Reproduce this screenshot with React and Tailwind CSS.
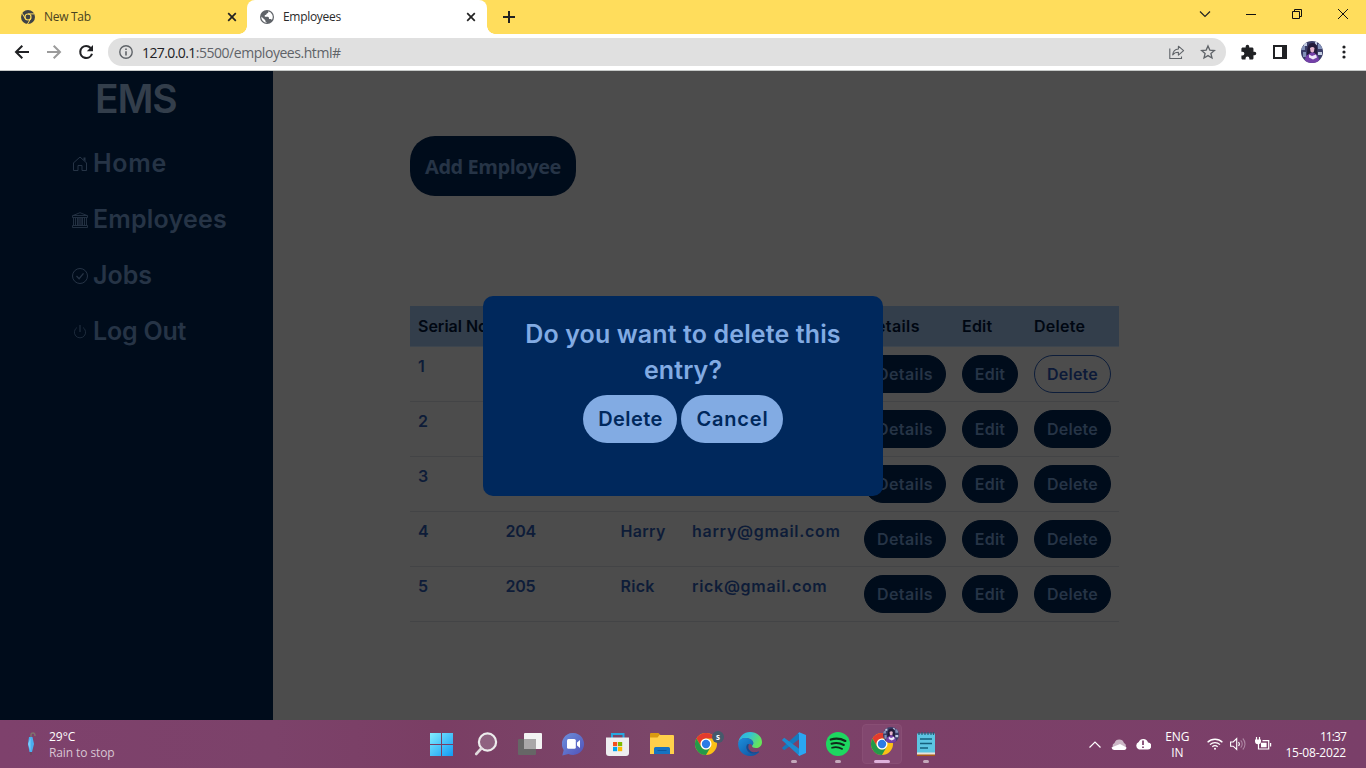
import React from "react";

/* ---------- Browser icons ---------- */
const CloseX = () => (
  <svg width="10" height="10" viewBox="0 0 10 10" stroke="#222" strokeWidth="1.7" fill="none">
    <path d="M1.2 1.2l7.6 7.6M8.8 1.2L1.2 8.8" />
  </svg>
);

const GrayChrome = () => (
  <svg width="14" height="14" viewBox="0 0 14 14">
    <circle cx="7" cy="7" r="7" fill="#3f4246" />
    <circle cx="7" cy="7" r="3.6" fill="#ffdd5c" />
    <circle cx="7" cy="7" r="2.4" fill="#3f4246" />
    <path d="M7 3.9h6.4M4.3 8.6L1.1 3.2M9.7 8.6l-3.2 5.4" stroke="#ffdd5c" strokeWidth="1" />
  </svg>
);

const Globe = () => (
  <svg width="16" height="16" viewBox="0 0 16 16">
    <circle cx="8" cy="8" r="7" fill="#5f6368" />
    <path d="M9.200 2.300c.5 1.200-.2 2-1.400 2.200-.3 1.200-1 1.500-2 1.600v1.600h2.900c1.200 0 1.300 1 1.300 2.200h1.300c1 0 1.300.5 1.500 1.100A5.700 5.700 0 009.200 2.300z" fill="#fff" />
    <path d="M2.300 7.600l4 3.700c0 1.200.3 1.700 1.200 1.800v.6A5.700 5.700 0 012.300 7.600z" fill="#fff" />
  </svg>
);

const BackIcon = ({ flip }) => (
  <svg width="16" height="16" viewBox="0 0 16 16" fill="none" stroke={flip ? "#9b9b9b" : "#202124"} strokeWidth="2" className={flip ? "-scale-x-100" : ""}>
    <path d="M15 8H2.500M8.300 1.700L2 8l6.300 6.300" />
  </svg>
);

const ReloadIcon = () => (
  <svg width="16" height="16" viewBox="0 0 16 16">
    <path d="M14 9.800A6 6 0 118.200 2c1.800 0 3.300.8 4.400 2" fill="none" stroke="#202124" strokeWidth="2.100" />
    <path d="M15 1v6.200H8.800z" fill="#202124" />
  </svg>
);

const InfoIcon = () => (
  <svg width="14" height="14" viewBox="0 0 14 14" fill="none" stroke="#5f6368" strokeWidth="1.400">
    <circle cx="7" cy="7" r="6.200" />
    <path d="M7 6.200v4.200M7 3.500v1.500" strokeWidth="1.600" />
  </svg>
);

const ShareIcon = () => (
  <svg width="16" height="16" viewBox="0 0 16 16" fill="none" stroke="#5f6368" strokeWidth="1.100">
    <path d="M.8 4.500v10h11.700V12.500" />
    <path d="M3.700 10.800c.4-3.800 2.200-5.600 5.700-5.800V2.200l5.200 4.500-5.200 4.400V8.300c-2.500 0-4.300.6-5.700 2.500z" strokeLinejoin="round" />
  </svg>
);

const StarIcon = () => (
  <svg width="16" height="16" viewBox="0 0 16 16" fill="none" stroke="#5f6368" strokeWidth="1.300">
    <path d="M8 1.900l1.800 4.200 4.600.4-3.500 3 1.100 4.500L8 11.600 4 14l1.100-4.500-3.500-3 4.600-.4z" />
  </svg>
);

const PuzzleIcon = () => (
  <svg width="17" height="17" viewBox="0 0 24 24" fill="#202124">
    <path d="M20.500 11H19V7c0-1.100-.9-2-2-2h-4V3.500a2.500 2.500 0 00-5 0V5H4c-1.100 0-2 .9-2 2v3.800h1.500a2.700 2.700 0 010 5.400H2V20c0 1.100.9 2 2 2h3.800v-1.500a2.700 2.700 0 015.400 0V22H17c1.100 0 2-.9 2-2v-4h1.500a2.500 2.500 0 000-5z" />
  </svg>
);

const Avatar = ({ className }) => (
  <svg viewBox="0 0 22 22" className={className}>
    <clipPath id="face"><circle cx="11" cy="11" r="11" /></clipPath>
    <g clipPath="url(#face)">
      <rect width="22" height="22" fill="#3a3d68" />
      <path d="M0 5h4v4H0zM17 3h4v5h-4zM2 11h3v5H2z" fill="#8391b8" />
      <path d="M3 2h3v3H3zM17 11h4v3h-4zM14 1h2v3h-2z" fill="#c3cce2" />
      <path d="M6 14c0-8 1-12 5.500-12S17 6 16 14z" fill="#241b3a" />
      <path d="M9 7q2.500-2 4.500 0l-.5 3.500-1.700 1.500-1.800-1.500z" fill="#e4b4ca" />
      <path d="M3 22l2-7 5-3.500h3l4 3.500 2 7z" fill="#7440a8" />
      <path d="M8 13.500l3 1.500 4-1.500 1 3-4 2-4-2z" fill="#efe6f8" />
    </g>
  </svg>
);

/* ---------- Sidebar icons ---------- */
const iconBase = { width: 16, height: 16, viewBox: "0 0 16 16", fill: "none", stroke: "currentColor" };
const HomeIcon = () => (
  <svg {...iconBase} strokeWidth="1">
    <path d="M1.500 6.800v7.700H6V9.500h4v5h4.500V6.800M1.200 7.200L8 1l6.800 6.200" />
    <path d="M11.500 1.500h2v4l-2-1.900z" fill="currentColor" stroke="none" />
  </svg>
);
const BankIcon = () => (
  <svg {...iconBase} strokeWidth=".9">
    <path d="M1 3.500L8 .7l7 2.800M.5 3.500h15v2H.5zM.5 13.500h15v2H.5zM1.500 5.500v8M3.500 5.500v8M5.500 5.500v8M10.500 5.500v8M12.500 5.500v8M14.500 5.500v8" />
    <path d="M6 6h4v7H6z" fill="currentColor" stroke="none" opacity=".6" />
  </svg>
);
const CheckIcon = () => (
  <svg {...iconBase} strokeWidth="1">
    <circle cx="8" cy="8" r="7.500" />
    <path d="M4.500 8l2.600 2.700 4.400-5.400" strokeWidth="1.300" />
  </svg>
);
const PowerIcon = () => (
  <svg {...iconBase} strokeWidth="1">
    <path d="M5 3.500a5.600 5.600 0 106 0" opacity=".75" />
    <path d="M8 1v7" />
  </svg>
);

/* ---------- Taskbar icons ---------- */
const WindowsIcon = () => (
  <svg width="24" height="24" viewBox="0 0 24 24">
    <defs><linearGradient id="win" x1="0" y1="0" x2="1" y2="1"><stop stopColor="#83edff" /><stop offset="1" stopColor="#109af4" /></linearGradient></defs>
    <path d="M0 1h11v11H0zM12 1h11v11H12zM0 13h11v11H0zM12 13h11v11H12z" fill="url(#win)" />
  </svg>
);
const SearchIcon = () => (
  <svg width="24" height="24" viewBox="0 0 24 24" fill="none">
    <circle cx="13.500" cy="10" r="8.600" fill="#8f6280" stroke="#ececec" strokeWidth="2.200" />
    <path d="M7.300 16.500L2.200 22" stroke="#e0dadd" strokeWidth="2.600" strokeLinecap="round" />
  </svg>
);
const TaskViewIcon = () => (
  <svg width="24" height="24" viewBox="0 0 24 24">
    <rect x="6" y="1" width="18" height="16" rx="1" fill="#f3f3f3" />
    <rect y="7" width="18" height="16" rx="1" fill="#666" />
    <path d="M6 7h12v10H6z" fill="#a9a7a8" />
  </svg>
);
const ChatIcon = () => (
  <svg width="24" height="24" viewBox="0 0 24 24">
    <defs><linearGradient id="chat" x1="0" y1="0" x2="1" y2="1"><stop stopColor="#6c90dc" /><stop offset="1" stopColor="#5150b8" /></linearGradient></defs>
    <path d="M11.500 1a11 11 0 11-5 21L.3 23.500l1.400-5.500A11 11 0 0111.500 1z" fill="url(#chat)" />
    <rect x="5" y="7" width="8.800" height="9.800" rx="1.500" fill="#fff" />
    <path d="M15 10.500l3-2.500v8l-3-2.500z" fill="#fff" />
  </svg>
);
const StoreIcon = () => (
  <svg width="24" height="24" viewBox="0 0 24 24">
    <path d="M6 7V2h11.500v5" fill="none" stroke="#28a8e0" strokeWidth="2" />
    <path d="M0 5.500h23v15.500a3 3 0 01-3 3H3a3 3 0 01-3-3z" fill="#eeeef0" />
    <path d="M7 10h4.200v4.200H7z" fill="#f25022" />
    <path d="M12 10h4.200v4.200H12z" fill="#7fba00" />
    <path d="M7 15h4.200v4.200H7z" fill="#00a4ef" />
    <path d="M12 15h4.200v4.200H12z" fill="#ffb900" />
  </svg>
);
const FolderIcon = () => (
  <svg width="24" height="24" viewBox="0 0 24 24">
    <path d="M0 2a1 1 0 011-1h7.500l2 2-2 3H0z" fill="#d99a12" />
    <path d="M9.500 3H23a1 1 0 011 1v18H0V5.500h7.500z" fill="#ffd04b" />
    <path d="M4 22v-5.500A1.500 1.500 0 015.500 15h13a1.500 1.500 0 011.500 1.500V22z" fill="#1673c2" />
    <path d="M7.500 18.500h9" stroke="#0e589f" />
  </svg>
);
const ChromeIcon = () => (
  <svg width="24" height="24" viewBox="0 0 24 24">
    <circle cx="12" cy="12" r="11" fill="#fbc116" />
    <path d="M2.470 6.500A11 11 0 0121.530 6.500H12a5.500 5.500 0 00-4.760 8.250z" fill="#e33b2e" />
    <path d="M2.470 6.500l4.770 8.250A5.500 5.500 0 0016.760 14.750L12 23A11 11 0 012.470 6.500z" fill="#24994a" />
    <circle cx="12" cy="12" r="5.500" fill="#fff" />
    <circle cx="12" cy="12" r="4.200" fill="#2c7be5" />
  </svg>
);
const EdgeIcon = () => (
  <svg width="24" height="24" viewBox="0 0 24 24">
    <defs>
      <linearGradient id="edgeTop" x1="0" y1="0" x2="1" y2=".4"><stop stopColor="#2baee8" /><stop offset=".5" stopColor="#35c4d0" /><stop offset="1" stopColor="#66e45a" /></linearGradient>
      <linearGradient id="edgeLow" x1="0" y1="0" x2="1" y2="1"><stop stopColor="#1b8fdc" /><stop offset="1" stopColor="#0f4d9b" /></linearGradient>
    </defs>
    <path d="M.2 11C1 4.500 6 0 12 0c7 0 12 4.500 12 10 0 4-3 6-6 6-2.500 0-4-1-4-2 0-.8 1.300-1.200 1.300-3C15.300 8.500 12 6 8 6 4 6 1 8 .2 11z" fill="url(#edgeTop)" />
    <path d="M.2 11C1 8 4 6 7.500 6c4.500 0 7.800 2.500 7.800 5 0 1.200-.5 1.800-1 2.500C13 11 8.500 11.500 8.500 15.500c0 4 4 7 9 5.500.8-.3 2-1 3-1.500.6 0 .8.4.5.8A12 12 0 0112 24C5 24-.5 18 .2 11z" fill="url(#edgeLow)" />
    <path d="M9 12.500c-2 4 1 8.500 5.500 9 3 .3 5-1 6.500-2-4 1.500-8 1-10-2-1-1.600-1-3.600 0-5.500z" fill="#0d4d94" />
  </svg>
);
const VSCodeIcon = () => (
  <svg width="24" height="24" viewBox="0 0 24 24">
    <path d="M17.500 7L2.200 18.300.4 16.600a.9.900 0 010-1.200L17.200.3z" fill="#1479bd" />
    <path d="M17.500 17L2.200 5.700.4 7.400a.9.900 0 000 1.200l16.800 15.100z" fill="#1b8bd0" />
    <path d="M17.200.2L24 3v18l-6.800 2.900-1-1.400.8-1V2.500l-.8-1z" fill="#2ba6f2" />
  </svg>
);
const SpotifyIcon = () => (
  <svg width="24" height="24" viewBox="0 0 24 24">
    <circle cx="12" cy="12" r="12" fill="#1ed760" />
    <g fill="none" stroke="#10291a" strokeLinecap="round">
      <path d="M4.800 7.500c5-1.500 10-1 14.500 1.400" strokeWidth="2.300" />
      <path d="M5.500 11.700c4.300-1.200 8.500-.8 12.300 1.300" strokeWidth="2" />
      <path d="M6 15.700c3.500-1 7-.6 10.200 1.200" strokeWidth="1.700" />
    </g>
  </svg>
);
const NotepadIcon = () => (
  <svg width="24" height="24" viewBox="0 0 24 24">
    <path d="M3 1.500h18V21H3z" fill="#5cc5e2" />
    <path d="M3 20.500h18v3H3z" fill="#e9e2da" />
    <path d="M3 22.500h18V24H3z" fill="#a85a16" />
    <path d="M5 0v3M8 0v3M11 0v3M14 0v3M17 0v3M19.500 0v3" stroke="#245f78" strokeWidth="1.200" />
    <path d="M6 7h12M6 11.500h12M6 16h8" stroke="#15607c" strokeWidth="1.600" />
  </svg>
);

/* ---------- Browser chrome ---------- */
function TabStrip() {
  return (
    <div className="flex h-[34px] bg-[#ffdd5c] text-[12px] text-[#2a2a2a]">
      <div className="flex h-[34px] w-[247px] items-center pr-[10px] pl-[21px]">
        <GrayChrome />
        <span className="ml-[9px] flex-1 tracking-[-0.3px] text-[#4a431f]">New Tab</span>
        <CloseX />
      </div>
      <div className="relative flex h-[34px] w-[240px] items-center rounded-t-lg bg-white pr-[11px] pl-[12px]">
        <div className="absolute bottom-0 -left-2 size-2 bg-[radial-gradient(circle_at_0_0,#ffdd5c_7.5px,#fff_8px)]" />
        <div className="absolute -right-2 bottom-0 size-2 bg-[radial-gradient(circle_at_100%_0,#ffdd5c_7.5px,#fff_8px)]" />
        <Globe />
        <span className="ml-2 flex-1 tracking-[-0.3px]">Employees</span>
        <CloseX />
      </div>
      <div className="flex h-[34px] w-[44px] items-center justify-center">
        <svg width="12" height="12" viewBox="0 0 12 12" stroke="#222" strokeWidth="2"><path d="M6 0v12M0 6h12" /></svg>
      </div>
      <div className="ml-auto grid h-7 grid-cols-4 place-items-center">
        <span className="grid w-[46px] place-items-center"><svg width="12" height="12" viewBox="0 0 12 12" fill="none" stroke="#222" strokeWidth="1.200"><path d="M1 3.500l5 5 5-5" /></svg></span>
        <span className="grid w-[46px] place-items-center"><svg width="10" height="10" viewBox="0 0 10 10" stroke="#111"><path d="M0 5.500h10" /></svg></span>
        <span className="grid w-[46px] place-items-center"><svg width="10" height="10" viewBox="0 0 10 10" fill="none" stroke="#111"><path d="M.5 2.500h7v7h-7zM2.500 2.500v-2h7v7h-2" /></svg></span>
        <span className="grid w-[46px] place-items-center"><svg width="10" height="10" viewBox="0 0 10 10" stroke="#111"><path d="M0 0l10 10M10 0L0 10" /></svg></span>
      </div>
    </div>
  );
}

function Toolbar() {
  const cell = "grid w-8 shrink-0 place-items-center";
  return (
    <div className="flex h-[37px] border-b border-[#c6c9c8] bg-white pl-[6px]">
      <span className={cell}><BackIcon /></span>
      <span className={cell}><BackIcon flip /></span>
      <span className={cell}><ReloadIcon /></span>
      <div className="mt-1 ml-[6px] flex h-7 w-[1118px] items-center rounded-full bg-[#e0e0e0] pr-[10px] pl-[11px] text-[14px]">
        <InfoIcon />
        <span className="ml-[9px] tracking-[-0.6px] text-[#202124]">127.0.0.1</span>
        <span className="flex-1 tracking-[-0.45px] text-[#5f6368]">:5500/employees.html#</span>
        <ShareIcon />
        <span className="ml-[15px]"><StarIcon /></span>
      </div>
      <div className="ml-[6px] flex">
        <span className={cell}><PuzzleIcon /></span>
        <span className={cell}><svg width="14" height="14" viewBox="0 0 14 14" fill="none"><path d="M1 1h12v12H1z" stroke="#202124" strokeWidth="2" /><path d="M9 0h5v14H9z" fill="#202124" /></svg></span>
        <span className={cell}><Avatar className="size-[22px]" /></span>
        <span className={cell}><svg width="4" height="14" viewBox="0 0 4 14" fill="#202124"><circle cx="2" cy="2" r="1.600" /><circle cx="2" cy="7" r="1.600" /><circle cx="2" cy="12" r="1.600" /></svg></span>
      </div>
    </div>
  );
}

/* ---------- Page ---------- */
const nav = [
  { label: "Home", Icon: HomeIcon, track: "tracking-[0.7px]" },
  { label: "Employees", Icon: BankIcon, track: "tracking-[0.2px]" },
  { label: "Jobs", Icon: CheckIcon, track: "tracking-[0px]" },
  { label: "Log Out", Icon: PowerIcon, track: "tracking-[-0.2px]" },
];

function Sidebar() {
  return (
    <aside className="w-[273px] shrink-0 bg-[#000c1b]">
      <h1 className="h-[65px] pl-[95px] text-[39px] leading-[55px] font-semibold tracking-[-1.2px] text-[#333e4b]">EMS</h1>
      <nav>
        {nav.map(({ label, Icon, track }) => (
          <a key={label} className="flex h-14 items-center gap-[5px] pl-[72px] text-[25px] font-semibold text-[#263446]">
            <Icon />
            <span className={track}>{label}</span>
          </a>
        ))}
      </nav>
    </aside>
  );
}

const rows = [
  { n: "1" },
  { n: "2" },
  { n: "3" },
  { n: "4", id: "204", name: "Harry", mail: "harry@gmail.com" },
  { n: "5", id: "205", name: "Rick", mail: "rick@gmail.com" },
];
const cols = "grid grid-cols-[87.5px_115px_71.5px_172px_98px_72px_93px]";
const pill = "mt-px flex h-[38px] items-center justify-center rounded-full border border-[#000c1b] bg-[#000c1b] pb-px text-[#263446]";
const pillOutline = "mt-px flex h-[38px] items-center justify-center rounded-full border border-[#0d1d3a] pb-px text-[#0d1a38]";

function Table() {
  return (
    <div className="mt-[110px] w-[709px] text-[16px] font-semibold">
      <div className={`${cols} h-[41px] items-center border-b border-[#3d454e] bg-[#333e4b] pb-px text-[#000712]`}>
        <span className="pl-2">Serial No</span>
        <span />
        <span />
        <span />
        <span className="pl-2 tracking-[0.4px]">Details</span>
        <span className="pl-2 tracking-[0.2px]">Edit</span>
        <span className="pl-2 tracking-[0.25px]">Delete</span>
      </div>
      {rows.map((r) => (
        <div key={r.n} className={`${cols} h-[55px] border-b border-[#434446] pt-[7px] text-[#0e1c38]`}>
          <span className="pl-2">{r.n}</span>
          <span className="pl-2 tracking-[-0.3px]">{r.id}</span>
          <span className="pl-2 tracking-[0.3px]">{r.name}</span>
          <span className="pl-2 tracking-[0.7px]">{r.mail}</span>
          <span className="pl-2"><button className={`${pill} w-[82px] tracking-[0.4px]`}>Details</button></span>
          <span className="pl-2"><button className={`${pill} w-[56px] tracking-[0.2px]`}>Edit</button></span>
          <span className="pl-2"><button className={`${r.n === "1" ? pillOutline : pill} w-[77px] tracking-[0.25px]`}>Delete</button></span>
        </div>
      ))}
    </div>
  );
}

function Dialog() {
  return (
    <div className="absolute top-[225px] left-[483px] h-[200px] w-[400px] rounded-[10px] bg-[#00285c] pt-5 text-center text-[#82abe3]">
      <h2 className="text-[25px] leading-9 font-semibold tracking-[0.12px]">
        Do you want to delete this
        <br />
        entry?
      </h2>
      <div className="mt-[7px] flex justify-center gap-1 text-[20px] font-semibold text-[#00285c]">
        <button className="h-12 w-[94px] rounded-full bg-[#82abe3] pl-px tracking-[0.45px]">Delete</button>
        <button className="h-12 w-[102px] rounded-full bg-[#82abe3] pl-px tracking-[0.8px]">Cancel</button>
      </div>
    </div>
  );
}

/* ---------- Taskbar ---------- */
const apps = [
  { I: WindowsIcon }, { I: SearchIcon }, { I: TaskViewIcon }, { I: ChatIcon }, { I: StoreIcon }, { I: FolderIcon },
  { I: ChromeIcon, badge: "s" }, { I: EdgeIcon }, { I: VSCodeIcon, run: true }, { I: SpotifyIcon, run: true },
  { I: ChromeIcon, active: true }, { I: NotepadIcon, run: true },
];

function Taskbar() {
  return (
    <footer className="flex h-12 bg-[linear-gradient(90deg,#7e416c_0%,#7c426a_20%,#7a3e64_32%,#7b4669_48%,#7c4068_65%,#7a3f69_100%)] text-[12px] leading-4 text-white">
      <div className="flex w-[420px] items-center pl-[26px]">
        <svg width="10" height="24" viewBox="0 0 10 24">
          <path d="M5 5V3q0-2 2-2t2 3" fill="none" stroke="#80716e" strokeWidth="1.500" />
          <path d="M3 5h3.500l1.500 7-2 8H3.500L2 12z" fill="#4aaef0" />
          <path d="M4.500 6v13L2 12z" fill="#79cbfa" />
          <path d="M5 20v3" stroke="#5f4b56" />
        </svg>
        <div className="ml-[13px] pt-[2px]">
          <div>29°C</div>
          <div className="tracking-[-0.1px] text-[#d9c6d3]">Rain to stop</div>
        </div>
      </div>
      <div className="flex">
        {apps.map(({ I, badge, run, active }, i) => (
          <div key={i} className="relative flex w-11 items-center justify-center">
            {active && <div className="absolute inset-x-[2px] inset-y-1 rounded border border-[#884e74] bg-[#82476f]" />}
            <div className="relative"><I /></div>
            {badge && <div className="absolute top-[11px] right-[4px] size-3 rounded-full bg-[#46596b] text-center text-[8px] leading-[11px] font-bold">{badge}</div>}
            {active && <Avatar className="absolute top-[7px] right-[5px] size-4" />}
            {run && <div className="absolute bottom-[5px] left-[19px] h-[3px] w-[6px] rounded-full bg-[#c4a9bb]" />}
            {active && <div className="absolute bottom-[5px] left-[14px] h-[3px] w-4 rounded-full bg-[#dfb2dc]" />}
          </div>
        ))}
      </div>
      <div className="ml-auto flex items-center pr-5">
        <svg width="12" height="7" viewBox="0 0 12 7" fill="none" stroke="#fff" strokeWidth="1.200"><path d="M.5 6.500l5.500-5.500 5.500 5.500" /></svg>
        <svg className="ml-[10px]" width="16" height="11" viewBox="0 0 16 11">
          <path d="M4 10.500a3.500 3.500 0 01-.5-6.500A5 5 0 0113 4a3.500 3.500 0 01-.5 6.500z" fill="#cbb7c5" />
          <path d="M.5 8.500L9 5l6.500 3.500a2.500 2.500 0 01-2 2.500H3a3 3 0 01-2.500-2.500z" fill="#fff" />
        </svg>
        <svg className="ml-2" width="16" height="12" viewBox="0 0 16 12">
          <path d="M4 11.500a4 4 0 01-.3-7.500 5 5 0 019.300.500 3.500 3.500 0 01-.5 7z" fill="#fff" />
          <path d="M8 2.500v4.500M8 8.500v1.600" stroke="#7a3f69" strokeWidth="1.700" />
        </svg>
        <div className="ml-[14px] pt-[2px] text-center tracking-[-0.1px]">ENG<br />IN</div>
        <svg className="ml-[18px]" width="16" height="12" viewBox="0 0 16 12" fill="none" stroke="#fff" strokeWidth="1.300">
          <path d="M.6 4.300a10.500 10.500 0 0114.800 0M3 6.600a7.200 7.200 0 0110 0M5.300 8.800a4 4 0 015.400 0" />
          <circle cx="8" cy="10.800" r="1" fill="#fff" stroke="none" />
        </svg>
        <svg className="ml-[7px]" width="16" height="14" viewBox="0 0 16 14" fill="none" stroke="#fff" strokeWidth="1.100">
          <path d="M.6 5v4.200h2.600L6.700 12.500V1.500L3.200 5zM8.500 5a3 3 0 010 4" />
          <path d="M10.700 3.300a5.300 5.300 0 010 7.400M12.800 1.500a8 8 0 010 11" stroke="#ad86a2" />
        </svg>
        <svg className="ml-[9px]" width="17" height="14" viewBox="0 0 17 14" fill="none" stroke="#fff" strokeWidth="1.200">
          <path d="M1.500 0v3M4.500 0v3M3.500 6v6h10.200V3.600H7.500M15.600 6v3.500" />
          <path d="M0 2.500h6v1.800a2.500 2.500 0 01-6 0zM6 5.800h5.600v4.400H6z" fill="#fff" stroke="none" />
        </svg>
        <div className="ml-[13px] pt-px text-right">
          <div className="tracking-[-0.9px]">11:37</div>
          <div className="tracking-[-0.2px]">15-08-2022</div>
        </div>
      </div>
    </footer>
  );
}

export default function App() {
  return (
    <div className="flex h-[768px] w-[1366px] flex-col overflow-hidden font-['Open_Sans','Noto_Sans',sans-serif]">
      <TabStrip />
      <Toolbar />
      <div className="relative flex flex-1 bg-[#4c4c4c] font-['Inter',sans-serif]">
        <Sidebar />
        <main className="pt-[65px] pl-[137px]">
          <button className="h-[60px] w-[166px] rounded-[25px] bg-[#000c1b] pt-px font-['Open_Sans',sans-serif] text-[20px] font-bold tracking-[-0.45px] text-[#263446]">Add Employee</button>
          <Table />
        </main>
        <Dialog />
      </div>
      <Taskbar />
    </div>
  );
}
